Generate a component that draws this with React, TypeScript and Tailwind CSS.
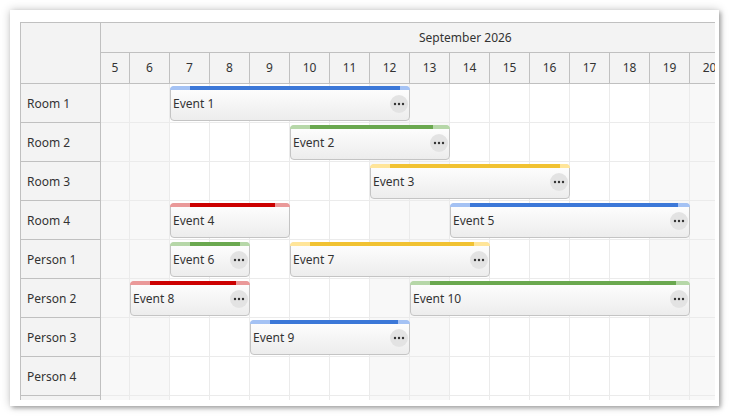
import React from "react";

const DAYS = [5, 6, 7, 8, 9, 10, 11, 12, 13, 14, 15, 16, 17, 18, 19, 20];
const WEEKEND = new Set([5, 6, 12, 13, 19, 20]);
const ROWS = ["Room 1", "Room 2", "Room 3", "Room 4", "Person 1", "Person 2", "Person 3", "Person 4", ""];

const COLORS = {
  blue: { light: "#a4c2f4", dark: "#3c78d8" },
  green: { light: "#b6d7a8", dark: "#6aa84f" },
  yellow: { light: "#ffe599", dark: "#f1c232" },
  red: { light: "#ea9999", dark: "#cc0000" },
};

type Ev = {
  name: string;
  row: number;
  x: number; // absolute page x
  w: number;
  color: keyof typeof COLORS;
  darkEnd: number;
  menu: boolean;
};

const EVENTS: Ev[] = [
  { name: "Event 1", row: 0, x: 170, w: 240, color: "blue", darkEnd: 230, menu: true },
  { name: "Event 2", row: 1, x: 290, w: 160, color: "green", darkEnd: 143, menu: true },
  { name: "Event 3", row: 2, x: 370, w: 200, color: "yellow", darkEnd: 190, menu: true },
  { name: "Event 4", row: 3, x: 170, w: 120, color: "red", darkEnd: 105, menu: false },
  { name: "Event 5", row: 3, x: 450, w: 240, color: "blue", darkEnd: 228, menu: true },
  { name: "Event 6", row: 4, x: 170, w: 80, color: "green", darkEnd: 70, menu: true },
  { name: "Event 7", row: 4, x: 290, w: 200, color: "yellow", darkEnd: 184, menu: true },
  { name: "Event 8", row: 5, x: 130, w: 120, color: "red", darkEnd: 106, menu: true },
  { name: "Event 10", row: 5, x: 410, w: 280, color: "green", darkEnd: 266, menu: true },
  { name: "Event 9", row: 6, x: 250, w: 160, color: "blue", darkEnd: 148, menu: true },
];

function MenuButton() {
  return (
    <div className="w-[18px] h-[18px] rounded-full bg-[#e3e3e3] flex items-center justify-center mr-[2px]">
      <svg width="18" height="18" viewBox="0 0 18 18">
        <circle cx="5" cy="9" r="1.2" fill="#333" />
        <circle cx="9" cy="9" r="1.2" fill="#333" />
        <circle cx="13" cy="9" r="1.2" fill="#333" />
      </svg>
    </div>
  );
}

function EventBox({ ev }: { ev: Ev }) {
  const c = COLORS[ev.color];
  return (
    <div
      className="absolute top-[2px] h-[35px] rounded-[4px] overflow-hidden bg-[linear-gradient(to_bottom,#ffffff,#ececec)]"
      style={{ left: ev.x - 101, width: ev.w }}
    >
      <div className="absolute inset-0 rounded-[4px] border border-[#c4c4c4]" />
      <div className="absolute top-0 left-0 right-0 h-[4px]" style={{ background: c.light }}>
        <div
          className="absolute top-0 h-[4px]"
          style={{ left: 20, width: ev.darkEnd - 20, background: c.dark }}
        />
      </div>
      <div className="relative h-full flex items-center justify-between pl-[3px] pt-[1px]">
        <span className="text-[12px] text-[#333]">{ev.name}</span>
        {ev.menu && <MenuButton />}
      </div>
    </div>
  );
}

export default function App() {
  return (
    <div
      className="w-[730px] h-[416px] bg-white pt-[10px] pl-[10px] overflow-hidden"
      style={{ fontFamily: '"Noto Sans", "Open Sans", sans-serif' }}
    >
      <div className="w-[709px] h-[396px] bg-white pl-[10px] pt-[12px] shadow-[0_0_9px_rgba(0,0,0,0.22),2px_2px_4px_rgba(0,0,0,0.28)]">
        <div className="w-[695px] h-[378px] border-l border-t border-[#c0c0c0] overflow-hidden flex flex-col text-[#333] text-[12px]">
          {/* header */}
          <div className="flex h-[61px] shrink-0">
            <div className="w-[80px] shrink-0 h-[61px] bg-[#f3f3f3] border-r border-b border-[#c0c0c0]" />
            <div className="flex flex-col">
              <div className="h-[30px] w-[640px] bg-[#f3f3f3] border-b border-[#c0c0c0] flex items-center pl-[318px]">
                September 2026
              </div>
              <div className="h-[31px] flex bg-[#f3f3f3] border-b border-[#c0c0c0]">
                {DAYS.map((d) => (
                  <div
                    key={d}
                    className={
                      (d === 5 ? "w-[29px]" : "w-[40px]") +
                      " shrink-0 h-full border-r border-[#c0c0c0] flex items-center justify-center"
                    }
                  >
                    {d}
                  </div>
                ))}
              </div>
            </div>
          </div>
          {/* rows */}
          {ROWS.map((name, ri) => (
            <div key={ri} className="flex h-[39px] shrink-0">
              <div className="w-[80px] shrink-0 h-full bg-[#f3f3f3] border-r border-b border-[#c0c0c0] flex items-center pl-[6px] pt-[1px]">
                {name}
              </div>
              <div className="relative flex h-full">
                {DAYS.map((d) => (
                  <div
                    key={d}
                    className={
                      (d === 5 ? "w-[29px]" : "w-[40px]") +
                      (WEEKEND.has(d) ? " bg-[#f8f8f8]" : " bg-white") +
                      " shrink-0 h-full border-r border-b border-[#ebebeb]"
                    }
                  />
                ))}
                {EVENTS.filter((e) => e.row === ri).map((e) => (
                  <EventBox key={e.name} ev={e} />
                ))}
              </div>
            </div>
          ))}
        </div>
      </div>
    </div>
  );
}
